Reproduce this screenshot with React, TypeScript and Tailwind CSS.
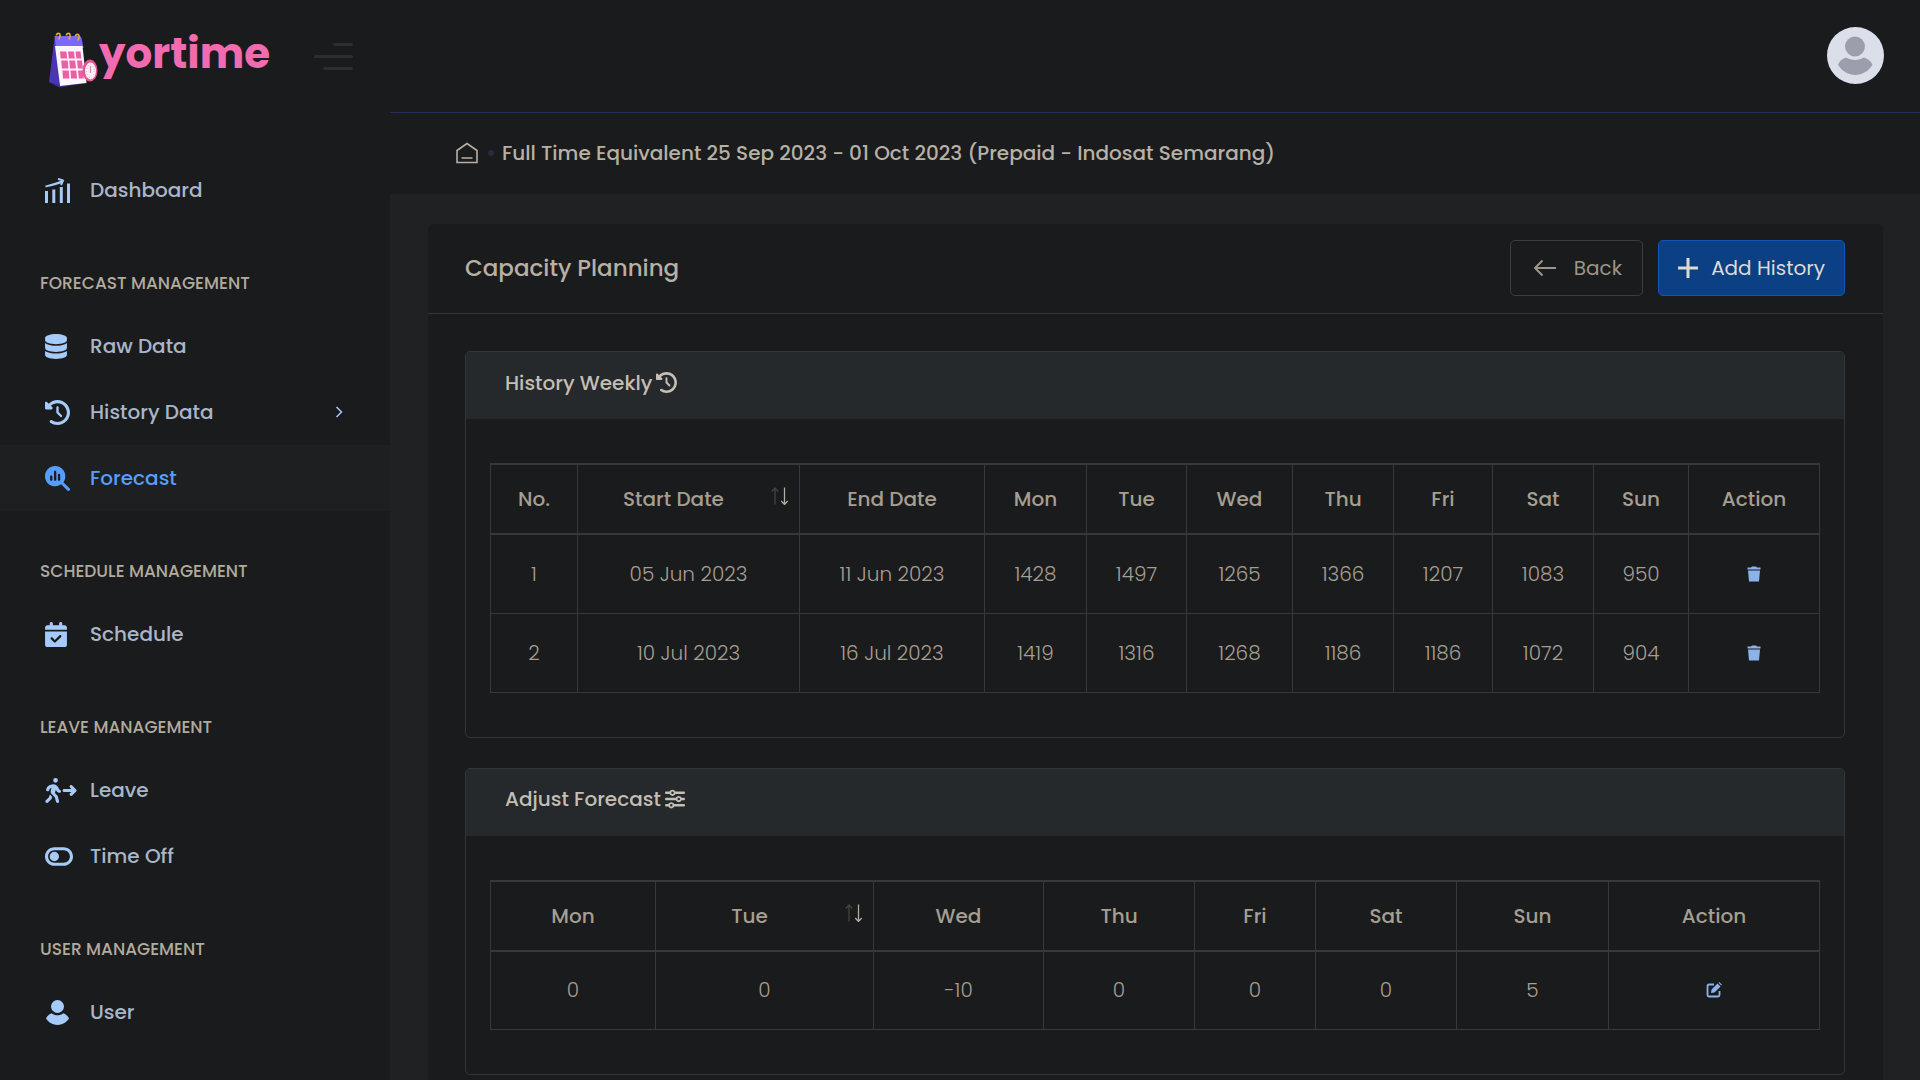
import React from "react";
import {
  FaDatabase,
  FaClockRotateLeft,
  FaMagnifyingGlassChart,
  FaCalendarCheck,
  FaPersonWalkingArrowRight,
  FaToggleOff,
  FaSliders,
} from "react-icons/fa6";

function ChartIcon({ className }: { className?: string }) {
  return (
    <svg viewBox="0 0 25 25" className={className} fill="none" stroke="currentColor" aria-hidden="true">
      <path d="M1.500 13v12M8.800 11.500V25M16.300 9v16M23.500 5.500V25" strokeWidth="3" />
      <path d="M0.500 8.500C7 7 12 6 18 3M13 .8l5 1.700-2 4.500" strokeWidth="2" />
    </svg>
  );
}

function UserIcon({ className }: { className?: string }) {
  return (
    <svg viewBox="0 0 25 25" className={className} fill="currentColor" aria-hidden="true">
      <circle cx="12.500" cy="6.500" r="6.500" />
      <path d="M6.800 13.200C9.800 16 15.200 16 18.200 13.200C21 14.300 23 16 24 18.500C18.500 27 6.500 27 1 18.500C2 16 4 14.300 6.800 13.200Z" />
    </svg>
  );
}

function LogoMark() {
  return (
    <svg viewBox="0 0 50 56" className="h-14 w-[50px] shrink-0" aria-hidden="true">
      <path d="M5.500 6L0 50l10.500 5.500L8 14z" fill="#4a35b8" />
      <path d="M5.500 4h24.500q2 0 2.500 2l2 10H7z" fill="#7b68ff" />
      <path d="M0 50l11 5.500 23-4-22 2z" fill="#3b2aa0" />
      <path d="M6 14h27.500l4 37L11 54z" fill="#fdf7fc" />
      <g fill="#ec5fa5">
        <path d="M11 19.500h6.500l.7 7h-6.500zM19 19.500h6l.8 7h-6zM26.500 19.500h5l.9 7h-5z" />
        <path d="M12.200 28.500h6.500l.7 8h-6.500zM20.200 28.500h6l.8 8h-6zM28 28.500h5l.9 8h-5z" />
        <path d="M13.400 38.500h6.300l.7 8h-6.400zM21.500 38.500h5.800l.8 8h-6zM29 38.500h5l.9 8h-5z" />
      </g>
      <g fill="none" stroke="#d9a93a" strokeWidth="1.800">
        <path d="M7.500 3.500c0-3 4-3 3.500.5l-1 3.500M17.500 3.500c0-3 4-3 3.500.5l-1 3.500M26.500 4.500c0-3 4-3 3.500.5l-1 3.500" />
      </g>
      <ellipse cx="41" cy="38.500" rx="7.500" ry="11" fill="#e2578f" />
      <ellipse cx="41.500" cy="39" rx="5.500" ry="8.500" fill="#fdf0f6" />
      <ellipse cx="41.500" cy="39" rx="3.800" ry="6.500" fill="none" stroke="#e7a9c6" strokeWidth="1" strokeDasharray="1 2" />
      <path d="M41.500 34v7" stroke="#d38cae" strokeWidth="1.300" />
    </svg>
  );
}

type Item = {
  label: string;
  icon: (p: { className?: string }) => React.ReactNode;
  iconClass: string;
  active?: boolean;
  arrow?: boolean;
};

const sections: { title?: string; items: Item[] }[] = [
  { items: [{ label: "Dashboard", icon: ChartIcon, iconClass: "size-[25px]" }] },
  {
    title: "FORECAST MANAGEMENT",
    items: [
      { label: "Raw Data", icon: FaDatabase, iconClass: "h-[25px] w-[22px]" },
      { label: "History Data", icon: FaClockRotateLeft, iconClass: "size-[25px]", arrow: true },
      { label: "Forecast", icon: FaMagnifyingGlassChart, iconClass: "size-[25px]", active: true },
    ],
  },
  {
    title: "SCHEDULE MANAGEMENT",
    items: [{ label: "Schedule", icon: FaCalendarCheck, iconClass: "h-[25px] w-[22px]" }],
  },
  {
    title: "LEAVE MANAGEMENT",
    items: [
      { label: "Leave", icon: FaPersonWalkingArrowRight, iconClass: "h-[25px] w-8" },
      { label: "Time Off", icon: FaToggleOff, iconClass: "h-[25px] w-7" },
    ],
  },
  {
    title: "USER MANAGEMENT",
    items: [{ label: "User", icon: UserIcon, iconClass: "size-[25px]" }],
  },
];

function Sidebar() {
  return (
    <aside className="w-[390px] shrink-0">
      <div className="flex h-[157px] items-start justify-between pt-6 pr-[37px] pl-[49px]">
        <a href="#" className="flex items-start" aria-label="yortime">
          <span className="pt-2">
            <LogoMark />
          </span>
          <span className="text-[42px] leading-[60px] font-bold text-[#f26bb0]">yortime</span>
        </a>
        <button type="button" aria-label="Toggle sidebar" className="mt-[19px] flex w-[39px] flex-col items-end gap-[9px]">
          <span className="h-[3px] w-5 rounded-full bg-[#2d2e30]" />
          <span className="h-[3px] w-full rounded-full bg-[#2d2e30]" />
          <span className="h-[3px] w-[30px] rounded-full bg-[#2d2e30]" />
        </button>
      </div>
      <nav>
        {sections.map((s, i) => (
          <section key={i}>
            {s.title && (
              <h2 className="mt-12 mb-[18px] pl-10 text-[17px] leading-6 font-medium text-[#b2aa9e]">{s.title}</h2>
            )}
            <ul>
              {s.items.map((it) => (
                <li key={it.label}>
                  <a
                    href="#"
                    className={
                      it.active
                        ? "flex h-[66px] items-center bg-[#1d1f20] pr-[47px] pl-[45px] text-xl font-medium text-[#559eff]"
                        : "flex h-[66px] items-center pr-[47px] pl-[45px] text-xl font-medium text-[#a9b6ca]"
                    }
                  >
                    <span className={it.active ? "w-[45px]" : "w-[45px] text-[#a6cbfa]"}>
                      <it.icon className={it.iconClass} />
                    </span>
                    {it.label}
                    {it.arrow && (
                      <svg viewBox="0 0 8 12" className="ml-auto h-3 w-2" fill="none" stroke="#a6cbfa" strokeWidth="1.500" aria-hidden="true">
                        <path d="M1.500 1l5 5-5 5" />
                      </svg>
                    )}
                  </a>
                </li>
              ))}
            </ul>
          </section>
        ))}
      </nav>
    </aside>
  );
}

function SortIcon() {
  return (
    <svg viewBox="0 0 18 18" className="absolute top-[22px] right-2.5 size-[18px]" fill="none" aria-hidden="true">
      <path d="M4 17.500V1M.8 4.500L4 1l3.200 3.500" stroke="#44433f" strokeWidth="1.300" />
      <path d="M13.500 .5v17M10.300 14l3.200 3.500 3.200-3.500" stroke="#b3aca0" strokeWidth="1.300" />
    </svg>
  );
}

function TrashIcon() {
  return (
    <svg viewBox="0 0 14 16" className="h-4 w-3.5" fill="#8bb3e8" aria-hidden="true">
      <path d="M.5 1.500h3.500L5 .5h4l1 1h3.500v2H.5zM1 4.500h12l-1 11H2z" />
    </svg>
  );
}

function EditIcon() {
  return (
    <svg viewBox="0 0 16 16" className="size-4" fill="none" aria-hidden="true">
      <path d="M8 2.500H3Q1.500 2.500 1.500 4v9q0 1.500 1.500 1.500h9q1.500 0 1.500-1.500V9" stroke="#8bb3e8" strokeWidth="1.800" />
      <path d="M5 11l.5-3.500 6-6 3 3-6 6zM12.500.8l.8-.8L16 2.700l-.8.8z" fill="#8bb3e8" />
    </svg>
  );
}

type Column = { label: string; width: string; sort?: boolean };

function DataTable({ columns, rows, action }: { columns: Column[]; rows: string[][]; action: "delete" | "edit" }) {
  return (
    <table className="w-full table-fixed border-collapse text-center text-xl text-[#a69e92]">
      <colgroup>
        {columns.map((c) => (
          <col key={c.label} className={c.width} />
        ))}
      </colgroup>
      <thead>
        <tr className="h-[70px] border-y-2 border-[#35393b]">
          {columns.map((c) => (
            <th
              key={c.label}
              className={
                c.sort
                  ? "relative border-x border-[#35393b] pr-[30px] font-medium"
                  : "border-x border-[#35393b] font-medium"
              }
            >
              {c.label}
              {c.sort && <SortIcon />}
            </th>
          ))}
        </tr>
      </thead>
      <tbody>
        {rows.map((r, i) => (
          <tr key={i} className="h-[79px]">
            {r.map((v, j) => (
              <td key={j} className="border border-[#35393b] font-light">
                {v}
              </td>
            ))}
            <td className="border border-[#35393b]">
              <button type="button" aria-label={action} className="mx-auto flex">
                {action === "delete" ? <TrashIcon /> : <EditIcon />}
              </button>
            </td>
          </tr>
        ))}
      </tbody>
    </table>
  );
}

function Panel({ title, icon, children }: { title: string; icon: React.ReactNode; children: React.ReactNode }) {
  return (
    <section className="overflow-hidden rounded-[5px] border border-[#323638]">
      <h3 className="flex h-[67px] items-center gap-1 bg-[#25292b] pb-1.5 pl-[39px] text-xl font-medium text-[#c4beb4]">
        {title}
        {icon}
      </h3>
      <div className="px-6 pt-11 pb-11">{children}</div>
    </section>
  );
}

const weekly: Column[] = [
  { label: "No.", width: "w-[87px]" },
  { label: "Start Date", width: "w-[222px]", sort: true },
  { label: "End Date", width: "w-[185px]" },
  { label: "Mon", width: "w-[102px]" },
  { label: "Tue", width: "w-[100px]" },
  { label: "Wed", width: "w-[106px]" },
  { label: "Thu", width: "w-[101px]" },
  { label: "Fri", width: "w-[99px]" },
  { label: "Sat", width: "w-[101px]" },
  { label: "Sun", width: "w-[95px]" },
  { label: "Action", width: "w-[131px]" },
];

const weeklyRows = [
  ["1", "05 Jun 2023", "11 Jun 2023", "1428", "1497", "1265", "1366", "1207", "1083", "950"],
  ["2", "10 Jul 2023", "16 Jul 2023", "1419", "1316", "1268", "1186", "1186", "1072", "904"],
];

const adjust: Column[] = [
  { label: "Mon", width: "w-[165px]" },
  { label: "Tue", width: "w-[218px]", sort: true },
  { label: "Wed", width: "w-[170px]" },
  { label: "Thu", width: "w-[151px]" },
  { label: "Fri", width: "w-[121px]" },
  { label: "Sat", width: "w-[141px]" },
  { label: "Sun", width: "w-[152px]" },
  { label: "Action", width: "w-[211px]" },
];

export default function App() {
  return (
    <div className="flex h-screen overflow-hidden bg-[#1a1b1c] font-['Poppins','Inter',sans-serif]">
      <Sidebar />
      <div className="flex min-w-0 flex-1 flex-col">
        <header className="flex h-[113px] shrink-0 items-center justify-end border-b border-[#262f5a] pr-9 pb-0.5">
          <button type="button" aria-label="Account" className="size-[57px] overflow-hidden rounded-full bg-[#dadfe9]">
            <svg viewBox="0 0 57 57" className="size-full" fill="#9c9eae" aria-hidden="true">
              <circle cx="28" cy="19.500" r="10" />
              <path d="M19 30.500c5 3.300 13 3.300 18 0 4 1.300 7 3.500 8.500 7.300-8 13.500-26.500 13.500-34.500 0 1.500-3.800 4-6 8-7.300z" />
            </svg>
          </button>
        </header>
        <nav aria-label="Breadcrumb" className="flex h-[81px] shrink-0 items-center pb-0.5 pl-[66px] text-xl font-medium text-[#b8b0a4]">
          <a href="#" aria-label="Home">
            <svg viewBox="0 0 22 22" className="size-[22px]" fill="none" stroke="currentColor" strokeWidth="1.600" aria-hidden="true">
              <path d="M1 8.500L11 1.500l10 7V20.500H1zM5.500 16h11" />
            </svg>
          </a>
          <span className="mr-2 ml-2.5 size-1.5 rounded-full bg-[#292b3b]" />
          <span className="whitespace-nowrap">
            Full Time Equivalent 25 Sep 2023 - 01 Oct 2023 (Prepaid - Indosat Semarang)
          </span>
        </nav>
        <main className="min-h-0 flex-1 overflow-hidden bg-[#202123] pt-[30px] pr-[37px] pl-[38px]">
          <div className="rounded-md bg-[#1a1b1c]">
            <div className="flex h-[90px] items-start justify-between border-b border-[#35383a] pt-4 pr-[38px] pl-[37px]">
              <h1 className="text-[23px] leading-[56px] font-medium text-[#b8b0a4]">Capacity Planning</h1>
              <div className="flex gap-[15px]">
                <button
                  type="button"
                  className="flex h-14 w-[133px] items-center justify-between rounded-[5px] border border-[#3a3d40] px-5 text-xl text-[#9e958a]"
                >
                  <svg viewBox="0 0 24 18" className="ml-0.5 h-[18px] w-6" fill="none" stroke="currentColor" strokeWidth="2" aria-hidden="true">
                    <path d="M23 9H2M9.500 1.500L2 9l7.500 7.500" />
                  </svg>
                  Back
                </button>
                <button
                  type="button"
                  className="flex h-14 w-[187px] items-center justify-between rounded-[5px] border border-[#1257b8] bg-[#0c4084] px-[19px] text-xl text-[#dedad3]"
                >
                  <svg viewBox="0 0 20 20" className="size-5" fill="none" stroke="currentColor" strokeWidth="3" aria-hidden="true">
                    <path d="M10 0v20M0 10h20" />
                  </svg>
                  Add History
                </button>
              </div>
            </div>
            <div className="flex flex-col gap-[30px] pt-[37px] pr-[38px] pb-10 pl-[37px]">
              <Panel title="History Weekly" icon={<FaClockRotateLeft className="size-[21px]" aria-hidden="true" />}>
                <DataTable columns={weekly} rows={weeklyRows} action="delete" />
              </Panel>
              <Panel title="Adjust Forecast" icon={<FaSliders className="size-5" aria-hidden="true" />}>
                <DataTable columns={adjust} rows={[["0", "0", "-10", "0", "0", "0", "5"]]} action="edit" />
              </Panel>
            </div>
          </div>
        </main>
      </div>
    </div>
  );
}
